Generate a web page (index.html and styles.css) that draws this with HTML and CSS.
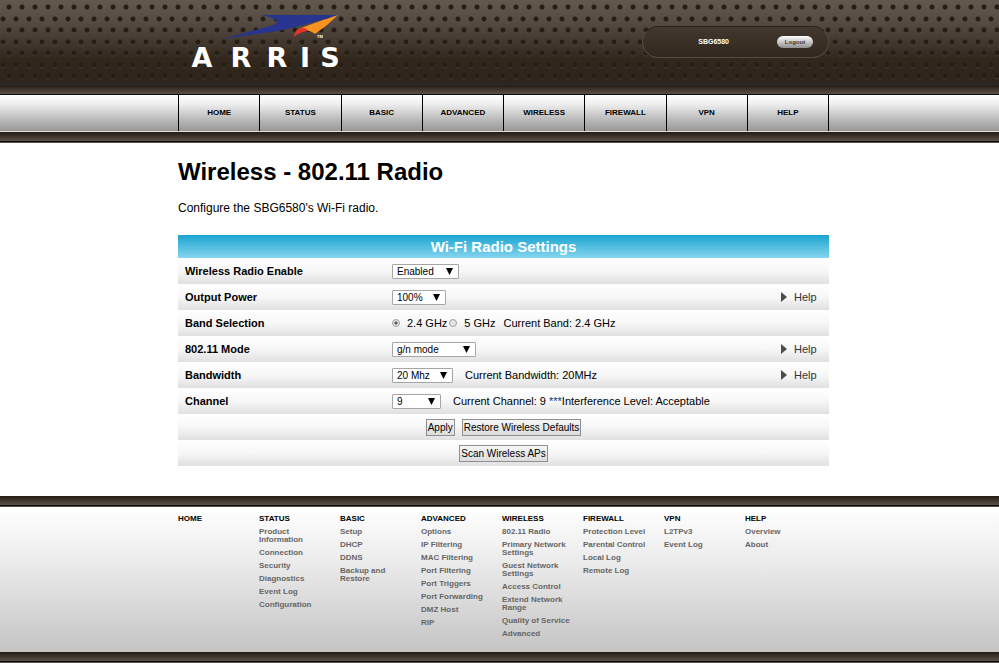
FILE: index.html
```html
<!DOCTYPE html>
<html lang="en">
<head>
<meta charset="utf-8">
<title>Wireless - 802.11 Radio</title>
<link rel="stylesheet" href="styles.css">
</head>
<body>
<header class="masthead">
  <div class="wrap">
    <div class="masthead-row">
    <svg class="logo" width="170" height="72" viewBox="-2 0 170 72" role="img" aria-label="ARRIS">
      <path fill="#27358f" d="M43 39 L88 26.500 Q98 24 97 21.500 Q94 17 80 15 L158 15 Q122 26 100 30.500 Q70 35 43 39Z"/>
      <path fill="#f7931e" d="M158 15 Q125 26 117 30 Q128 29 135 34 Q147 26 158 15Z"/>
      <path fill="#e63329" d="M114 37 Q114 29 122 28 Q127 28 128 31 Q119 32 114 37Z"/>
      <text class="tm" x="137" y="38">TM</text>
      <text class="wordmark" x="22 61 97 125 150" y="67">ARRIS</text>
    </svg>
    <div class="account">
      <span class="model">SBG6580</span>
      <button class="logout" type="button">Logout</button>
    </div>
    </div>
  </div>
</header>
<div class="band band-top"></div>
<nav class="menu">
  <div class="wrap">
    <div class="menu-items">
      <a href="#">HOME</a><a href="#">STATUS</a><a href="#">BASIC</a><a href="#">ADVANCED</a><a href="#">WIRELESS</a><a href="#">FIREWALL</a><a href="#">VPN</a><a href="#">HELP</a>
    </div>
  </div>
</nav>
<div class="band"></div>
<main class="wrap">
  <div class="content">
    <h1>Wireless - 802.11 Radio</h1>
    <p class="intro">Configure the SBG6580's Wi-Fi radio.</p>
    <form>
    <table class="settings">
      <thead><tr><th colspan="3">Wi-Fi Radio Settings</th></tr></thead>
      <tbody>
        <tr>
          <th><label for="enable">Wireless Radio Enable</label></th>
          <td><select id="enable" class="w-enable"><option>Enabled</option><option>Disabled</option></select></td>
          <td></td>
        </tr>
        <tr>
          <th><label for="power">Output Power</label></th>
          <td><select id="power" class="w-power"><option>100%</option><option>50%</option></select></td>
          <td><a class="help" href="#">Help</a></td>
        </tr>
        <tr>
          <th id="band">Band Selection</th>
          <td>
            <div class="line" role="radiogroup" aria-labelledby="band">
              <label class="choice"><input type="radio" name="band" checked>2.4 GHz</label>
              <label class="choice"><input type="radio" name="band">5 GHz</label>
              <span class="band-note">Current Band: 2.4 GHz</span>
            </div>
          </td>
          <td></td>
        </tr>
        <tr>
          <th><label for="mode">802.11 Mode</label></th>
          <td><select id="mode" class="w-mode"><option>g/n mode</option></select></td>
          <td><a class="help" href="#">Help</a></td>
        </tr>
        <tr>
          <th><label for="width">Bandwidth</label></th>
          <td><div class="line"><select id="width" class="w-width"><option>20 Mhz</option><option>40 Mhz</option></select><span class="note">Current Bandwidth: 20MHz</span></div></td>
          <td><a class="help" href="#">Help</a></td>
        </tr>
        <tr>
          <th><label for="channel">Channel</label></th>
          <td><div class="line"><select id="channel" class="w-channel"><option>9</option></select><span class="note">Current Channel: 9 <a class="stars" href="#">***</a>Interference Level: Acceptable</span></div></td>
          <td></td>
        </tr>
        <tr>
          <td class="actions" colspan="3"><div class="buttons"><button type="button">Apply</button><button type="button">Restore Wireless Defaults</button></div></td>
        </tr>
        <tr>
          <td class="actions" colspan="3"><div class="buttons"><button type="button">Scan Wireless APs</button></div></td>
        </tr>
      </tbody>
    </table>
    </form>
  </div>
</main>
<div class="band"></div>
<footer class="sitemap">
  <div class="wrap">
    <div class="columns">
      <section><h2>HOME</h2></section>
      <section><h2>STATUS</h2><ul><li><a href="#">Product Information</a></li><li><a href="#">Connection</a></li><li><a href="#">Security</a></li><li><a href="#">Diagnostics</a></li><li><a href="#">Event Log</a></li><li><a href="#">Configuration</a></li></ul></section>
      <section><h2>BASIC</h2><ul><li><a href="#">Setup</a></li><li><a href="#">DHCP</a></li><li><a href="#">DDNS</a></li><li><a href="#">Backup and Restore</a></li></ul></section>
      <section><h2>ADVANCED</h2><ul><li><a href="#">Options</a></li><li><a href="#">IP Filtering</a></li><li><a href="#">MAC Filtering</a></li><li><a href="#">Port Filtering</a></li><li><a href="#">Port Triggers</a></li><li><a href="#">Port Forwarding</a></li><li><a href="#">DMZ Host</a></li><li><a href="#">RIP</a></li></ul></section>
      <section><h2>WIRELESS</h2><ul><li><a href="#">802.11 Radio</a></li><li><a href="#">Primary Network Settings</a></li><li><a href="#">Guest Network Settings</a></li><li><a href="#">Access Control</a></li><li><a href="#">Extend Network Range</a></li><li><a href="#">Quality of Service</a></li><li><a href="#">Advanced</a></li></ul></section>
      <section><h2>FIREWALL</h2><ul><li><a href="#">Protection Level</a></li><li><a href="#">Parental Control</a></li><li><a href="#">Local Log</a></li><li><a href="#">Remote Log</a></li></ul></section>
      <section><h2>VPN</h2><ul><li><a href="#">L2TPv3</a></li><li><a href="#">Event Log</a></li></ul></section>
      <section><h2>HELP</h2><ul><li><a href="#">Overview</a></li><li><a href="#">About</a></li></ul></section>
    </div>
  </div>
</footer>
<div class="band"></div>
</body>
</html>
```
FILE: styles.css
```css
* { box-sizing: border-box; }

body {
  margin: 0;
  background: #fff;
  color: #000;
  font: 12px/14px "Liberation Sans", Arial, sans-serif;
}

a { color: inherit; text-decoration: none; }

/* Page column shared by every section */
.wrap { padding-left: 8px; }
.wrap > * { max-width: 651px; margin: 0 auto; }

/* Header */
.masthead {
  border-bottom: 1px solid #272c30;
  background:
    radial-gradient(circle at 9px 7px, #261d15 2px, transparent 3px) 0 0 / 13px 23px,
    radial-gradient(circle at 3px 19px, #261d15 2px, transparent 3px) 0 0 / 13px 23px,
    radial-gradient(circle at 9px 8px, rgba(90, 82, 66, .5) 2px, transparent 3px) 0 0 / 13px 23px,
    radial-gradient(circle at 3px 20px, rgba(90, 82, 66, .5) 2px, transparent 3px) 0 0 / 13px 23px,
    linear-gradient(#62584d, #564c44 25%, #42382f 50%, #31271d 70%, #2e241b);
}
.masthead-row {
  display: flex;
  align-items: flex-start;
  justify-content: space-between;
  padding-bottom: 12px;
}
.logo { display: block; }
.wordmark { font: bold 27px "DejaVu Sans", sans-serif; fill: #fff; text-anchor: middle; }
.tm { font: bold 4px "Liberation Sans", sans-serif; fill: #fff; }
.account {
  display: flex;
  align-items: center;
  justify-content: flex-end;
  gap: 48px;
  width: 187px;
  height: 32px;
  margin-top: 26px;
  padding: 0 15px;
  border: 1px solid #554b40;
  border-top-color: #2b221a;
  border-radius: 16px;
  background: linear-gradient(#43382f, #31271d);
}
.model { color: #fff; font-size: 7px; font-weight: bold; }
.logout {
  width: 36px;
  height: 12px;
  padding: 0;
  border: 0;
  border-radius: 6px;
  background: linear-gradient(#fff, #8f8f8f);
  color: #46361f;
  font: bold 6px/12px "Liberation Sans", Arial, sans-serif;
}

/* Dark strip between sections */
.band {
  height: 11px;
  border-bottom: 1px solid #56504b;
  background: linear-gradient(#241b15, #5a5047 9px, #0c0908 9px);
}
.band-top {
  height: 10px;
  border-bottom: 0;
}

/* Main menu */
.menu {
  border-bottom: 1px solid #dfe3df;
  background: linear-gradient(#fff, #eee 25%, #b8b8b8 70%, #989898);
}
.menu-items {
  display: grid;
  grid-template-columns: repeat(8, 1fr);
  border-right: 1px solid #000;
}
.menu-items a {
  border-left: 1px solid #000;
  font-size: 8px;
  font-weight: bold;
  line-height: 36px;
  text-align: center;
}

/* Content */
h1 { margin: 0; padding-top: 15px; font-size: 24px; line-height: 28px; }
.intro { margin: 15px 0 20px; }
.settings {
  width: 100%;
  border-collapse: collapse;
  font-size: 11px;
  margin-bottom: 30px;
}
.settings th, .settings td { padding: 0; text-align: left; }
.settings thead tr { height: 23px; background: linear-gradient(#1ba4d0, #85d5ef); }
.settings thead th { color: #fff; font-size: 15px; line-height: 23px; text-align: center; }
.settings tbody tr { height: 26px; background: linear-gradient(#fff, #f7f7f7 50%, #e0e0e0); }
.settings tbody th { width: 214px; padding-left: 7px; }
.settings td:last-child { width: 48px; }
.settings td.actions { width: auto; }
.line { display: flex; align-items: center; }
.note { margin-left: 12px; }
.choice { display: flex; align-items: center; }
.choice + .choice { margin-left: 2px; }
.band-note { margin-left: 8px; }
.stars { color: #003b8e; }

input[type="radio"] {
  appearance: none;
  width: 8px;
  height: 8px;
  margin: 0 7px 0 0;
  border: 1px solid #a0a0a0;
  border-radius: 50%;
  background: #e4e4e4;
}
input[type="radio"]:checked { background: radial-gradient(circle, #555 1px, #e4e4e4 2px); }

select {
  appearance: none;
  display: block;
  height: 15px;
  padding: 0 4px;
  border: 1px solid #a6a6a6;
  border-radius: 1px;
  background: #fff url("data:image/svg+xml,%3Csvg xmlns='http://www.w3.org/2000/svg' width='7' height='7'%3E%3Cpath d='M0 0h7L3.500 7z'/%3E%3C/svg%3E") no-repeat right 5px top 3px;
  color: #000;
  font: 10px/13px "Liberation Sans", Arial, sans-serif;
}
.w-enable { width: 67px; }
.w-power { width: 54px; }
.w-mode { width: 84px; }
.w-width { width: 61px; }
.w-channel { width: 49px; }

.help { display: flex; align-items: center; gap: 7px; color: #333; }
.help::before {
  content: "";
  border-left: 6px solid #4c4c4c;
  border-top: 5px solid transparent;
  border-bottom: 5px solid transparent;
}

.buttons { display: flex; justify-content: center; gap: 7px; }
.buttons button {
  height: 17px;
  padding: 0 1px;
  border: 1px solid #8f8f8f;
  border-radius: 0;
  background: linear-gradient(#f6f6f6, #dcdcdc);
  color: #000;
  font: 10px/15px "Liberation Sans", Arial, sans-serif;
}

/* Footer link columns */
.sitemap { padding: 8px 0 14px; background: linear-gradient(#fff, #eaeaea 40%, #c4c4c4); }
.columns { display: grid; grid-template-columns: repeat(8, 81px); font-size: 8px; font-weight: bold; }
.columns h2 { margin: 0 0 5px; font-size: 8px; line-height: 8px; }
.columns ul {
  display: flex;
  flex-direction: column;
  gap: 5px;
  margin: 0;
  padding: 0 8px 0 0;
  list-style: none;
  color: #666;
  line-height: 8px;
}
.columns a { display: block; }
```
